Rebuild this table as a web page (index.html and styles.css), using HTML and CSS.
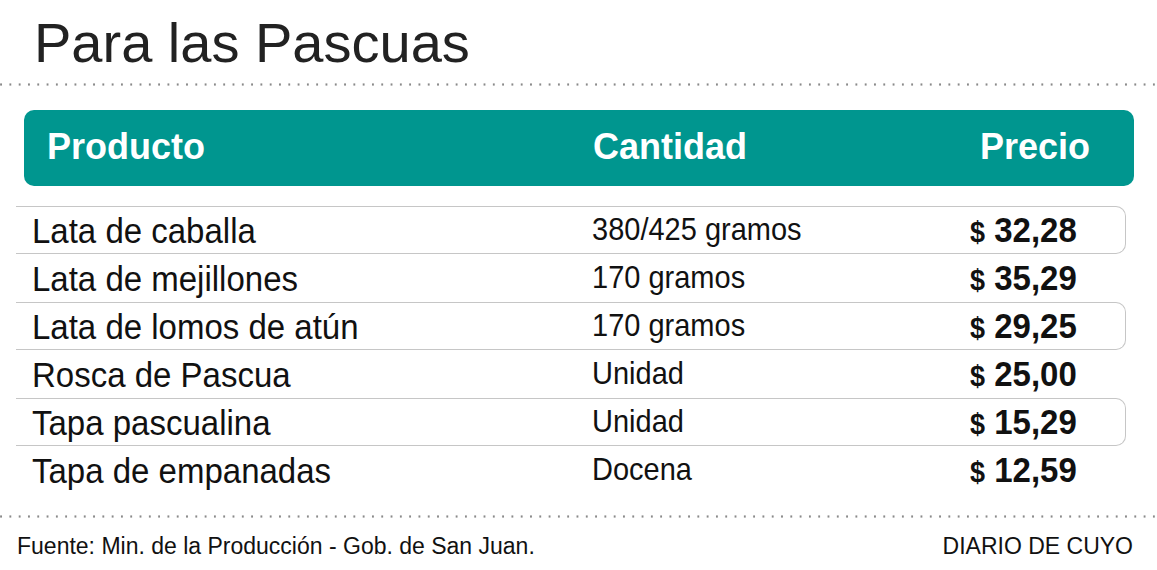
FILE: index.html
```html
<!DOCTYPE html>
<html lang="es">
<head>
<meta charset="utf-8">
<title>Para las Pascuas</title>
<link rel="stylesheet" href="styles.css">
</head>
<body>
<div class="page">
  <h1 class="title">Para las Pascuas</h1>
  <div class="dots dots-top"></div>

  <div class="head">
    <span>Producto</span>
    <span>Cantidad</span>
    <span>Precio</span>
  </div>

  <div class="rows">
    <div class="row boxed">
      <span class="prod">Lata de caballa</span>
      <span class="qty">380/425 gramos</span>
      <span class="price"><span class="cur">$</span> 32,28</span>
    </div>
    <div class="row">
      <span class="prod">Lata de mejillones</span>
      <span class="qty">170 gramos</span>
      <span class="price"><span class="cur">$</span> 35,29</span>
    </div>
    <div class="row boxed">
      <span class="prod">Lata de lomos de atún</span>
      <span class="qty">170 gramos</span>
      <span class="price"><span class="cur">$</span> 29,25</span>
    </div>
    <div class="row">
      <span class="prod">Rosca de Pascua</span>
      <span class="qty">Unidad</span>
      <span class="price"><span class="cur">$</span> 25,00</span>
    </div>
    <div class="row boxed">
      <span class="prod">Tapa pascualina</span>
      <span class="qty">Unidad</span>
      <span class="price"><span class="cur">$</span> 15,29</span>
    </div>
    <div class="row">
      <span class="prod">Tapa de empanadas</span>
      <span class="qty">Docena</span>
      <span class="price"><span class="cur">$</span> 12,59</span>
    </div>
  </div>

  <div class="dots dots-bottom"></div>

  <div class="foot">
    <span class="source">Fuente: Min. de la Producción - Gob. de San Juan.</span>
    <span class="brand">DIARIO DE CUYO</span>
  </div>
</div>
</body>
</html>
```

FILE: styles.css
```css
html, body {
  margin: 0;
  padding: 0;
  background: #ffffff;
}

.page {
  width: 1157px;
  height: 570px;
  font-family: "Liberation Sans", Arial, Helvetica, sans-serif;
  color: #111;
  overflow: hidden;
}

.title {
  margin: 0;
  padding: 15px 0 0 34px;
  font-size: 56px;
  line-height: 56px;
  font-weight: normal;
  color: #222;
}

.dots {
  height: 3px;
  background-image: radial-gradient(circle, #8a8a8a 0.9px, rgba(255,255,255,0) 1.4px);
  background-size: 9.3px 3px;
  background-repeat: repeat-x;
  background-position: -3.6px 0;
}

.dots-top {
  margin-top: 12px;
}

.head {
  margin: 24px 0 0 24px;
  width: 1110px;
  height: 76px;
  box-sizing: border-box;
  background: #00968f;
  border-radius: 10px;
  display: grid;
  grid-template-columns: 546px 387px auto;
  align-items: center;
  padding: 0 0 2px 23px;
  color: #ffffff;
  font-weight: bold;
  font-size: 36px;
  line-height: 40px;
}

.head span {
  display: inline-block;
  transform: scaleY(1.03);
}

.rows {
  margin: 20px 0 0 16px;
  width: 1110px;
}

.row {
  height: 48px;
  box-sizing: border-box;
  border: 1px solid transparent;
  border-left: none;
  display: grid;
  grid-template-columns: 560px 378px auto;
  align-items: center;
  padding: 4px 0 0 16px;
}

.row.boxed {
  border-color: #c6c6c6;
  border-radius: 0 10px 10px 0;
}

.prod,
.qty,
.price {
  display: inline-block;
  justify-self: start;
  transform-origin: 50% 78%;
}

.prod {
  font-size: 33px;
  line-height: 38px;
  transform: scaleY(1.08);
}

.qty {
  font-size: 29px;
  line-height: 34px;
  position: relative;
  top: -2px;
  transform: scaleY(1.08);
}

.price {
  font-size: 33px;
  line-height: 38px;
  font-weight: bold;
  transform: scaleY(1.06);
}

.cur {
  font-size: 27px;
}

.dots-bottom {
  margin-top: 21px;
}

.foot {
  display: flex;
  justify-content: space-between;
  padding: 17px 24px 0 17px;
  font-size: 23px;
  line-height: 23px;
  color: #111;
}
```
